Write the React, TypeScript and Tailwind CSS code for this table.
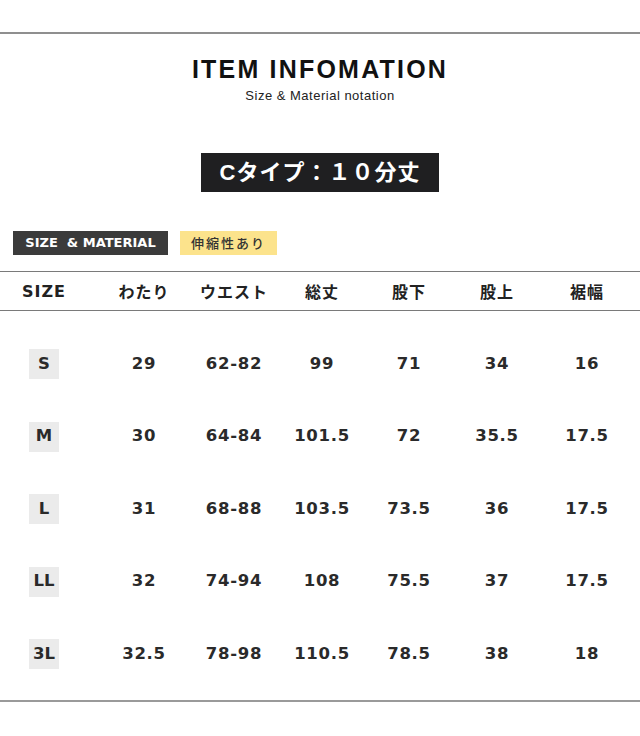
import React from 'react';

const HEADERS = ['SIZE', 'わたり', 'ウエスト', '総丈', '股下', '股上', '裾幅'];

const ROWS: string[][] = [
  ['S', '29', '62-82', '99', '71', '34', '16'],
  ['M', '30', '64-84', '101.5', '72', '35.5', '17.5'],
  ['L', '31', '68-88', '103.5', '73.5', '36', '17.5'],
  ['LL', '32', '74-94', '108', '75.5', '37', '17.5'],
  ['3L', '32.5', '78-98', '110.5', '78.5', '38', '18'],
];

const grid = 'grid grid-cols-[88px_112px_68px_108px_66px_110px_70px]';

export default function App() {
  return (
    <div className="w-[640px] h-[736px] bg-white text-[#222] pt-[32px] overflow-hidden">
      <div className="h-[2px] bg-[#8f8f8f]" />

      <div className="flex flex-col items-center">
        <h1 className="mt-[20px] h-[30px] leading-[30px] text-[25px] font-bold tracking-[2.2px] text-[#111] font-['Liberation_Sans',sans-serif]">
          ITEM INFOMATION
        </h1>
        <p className="mt-[4px] h-[16px] leading-[16px] text-[13px] tracking-[0.5px] text-[#222] font-['Liberation_Sans',sans-serif]">
          Size &amp; Material notation
        </p>
        <div className="mt-[49px] w-[238px] h-[39px] bg-[#1f1f21] flex items-center justify-center text-white text-[22px] font-bold tracking-[1px] font-['Liberation_Sans','Noto_Sans_CJK_JP',sans-serif]">
          Cタイプ：１０分丈
        </div>
      </div>

      <div className="mt-[39px] ml-[13px] flex gap-[12px] h-[24px]">
        <div className="w-[155px] bg-[#3b3b3b] text-white text-[13px] font-bold flex items-center justify-center font-['DejaVu_Sans',sans-serif]">
          SIZE &nbsp;&amp; MATERIAL
        </div>
        <div className="w-[97px] bg-[#fce38c] text-[#333] text-[13px] font-medium tracking-[2px] flex items-center justify-center font-['Noto_Sans_CJK_JP',sans-serif]">
          伸縮性あり
        </div>
      </div>

      <div className={`${grid} mt-[16px] h-[40px] border-y border-[#7a7a7a] items-center text-[16px] font-bold`}>
        {HEADERS.map((h, i) => (
          <div
            key={h}
            className={
              i === 0
                ? "text-center tracking-[1px] pt-[1px] font-['DejaVu_Sans',sans-serif]"
                : "text-center tracking-[1px] font-['Noto_Sans_CJK_JP',sans-serif]"
            }
          >
            {h}
          </div>
        ))}
      </div>

      <div className="pt-[17px] pb-[9px] border-b-2 border-[#9a9a9a]">
        {ROWS.map((row) => (
          <div key={row[0]} className={`${grid} h-[72.5px] items-center text-[16.5px] font-bold tracking-[0.7px] text-[#2a2a2a] font-['DejaVu_Sans',sans-serif]`}>
            {row.map((cell, i) =>
              i === 0 ? (
                <div key={i} className="flex justify-center">
                  <span className="w-[30px] h-[30px] bg-[#ebebeb] flex items-center justify-center tracking-normal">
                    {cell}
                  </span>
                </div>
              ) : (
                <div key={i} className="text-center">
                  {cell}
                </div>
              )
            )}
          </div>
        ))}
      </div>
    </div>
  );
}
